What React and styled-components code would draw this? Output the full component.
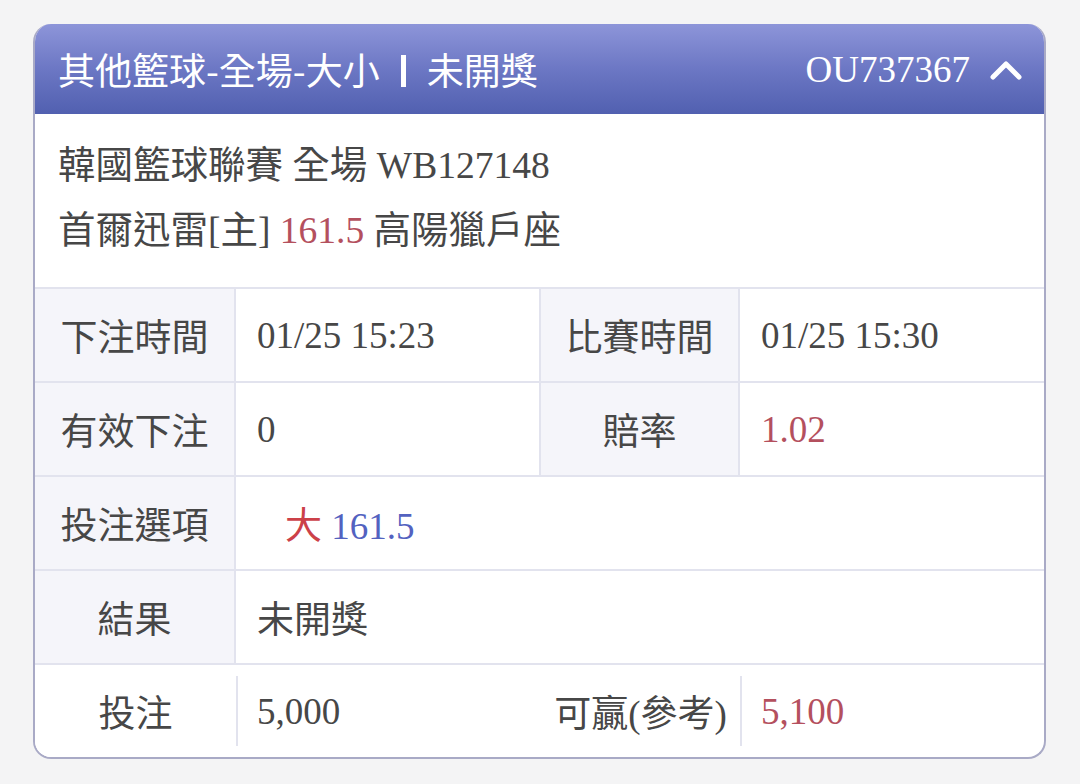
import styled, { createGlobalStyle } from "styled-components"

const Global = createGlobalStyle`
  body {
    margin: 0;
    background: #f4f4f5;
    font-family: "Liberation Serif", "Noto Sans CJK TC", serif;
    color: #474747;
  }
`

function Chevron() {
  return (
    <svg width="32" height="24" viewBox="0 0 32 24">
      <path d="M3 20 L16 7 L29 20" fill="none" stroke="#fff" strokeWidth="5" strokeLinecap="round" strokeLinejoin="round" />
    </svg>
  )
}

export default function App() {
  return (
    <>
      <Global />
      <Page>
        <Card>
          <Header>
            <Title>
              <span>其他籃球-全場-大小</span>
              <Bar />
              <span>未開獎</span>
            </Title>
            <Code>
              OU737367 <Chevron />
            </Code>
          </Header>

          <Info>
            <div>韓國籃球聯賽 全場 WB127148</div>
            <div>
              首爾迅雷[主] <Red>161.5</Red> 高陽獵戶座
            </div>
          </Info>

          <Row>
            <Label>下注時間</Label>
            <Value>01/25 15:23</Value>
            <Label>比賽時間</Label>
            <Value>01/25 15:30</Value>
          </Row>
          <Row>
            <Label>有效下注</Label>
            <Value>0</Value>
            <Label>賠率</Label>
            <Value><Red>1.02</Red></Value>
          </Row>
          <Row>
            <Label>投注選項</Label>
            <Value $span $indent>
              <span>
                <Big>大</Big> <Blue>161.5</Blue>
              </span>
            </Value>
          </Row>
          <Row>
            <Label>結果</Label>
            <Value $span>未開獎</Value>
          </Row>
          <Row $last>
            <Label $plain>投注</Label>
            <Value $short>5,000</Value>
            <Label $plain>可贏(參考)</Label>
            <Value $short><Red>5,100</Red></Value>
          </Row>
        </Card>
      </Page>
    </>
  )
}

const Page = styled.div`
  padding: 24px 34px 0 33px;
`

const Card = styled.div`
  border: 2px solid #a9aac6;
  border-top: none;
  border-radius: 18px;
  overflow: hidden;
  background: #fff;
`

const Header = styled.div`
  height: 90px;
  display: flex;
  align-items: center;
  justify-content: space-between;
  padding: 0 22px 0 23px;
  background: linear-gradient(180deg, #8d95d9 0%, #6c77c4 50%, #5160b0 100%);
  color: #fff;
`

const Title = styled.div`
  font-family: "Noto Sans CJK TC", sans-serif;
  font-size: 37px;
  display: flex;
  align-items: center;
  gap: 21px;
  white-space: pre;
`

const Bar = styled.span`
  display: inline-block;
  width: 5px;
  height: 32px;
  background: #fff;
  margin-top: 4px;
`

const Code = styled.div`
  font-size: 37px;
  display: flex;
  align-items: center;
  gap: 20px;
`

const Info = styled.div`
  padding: 19px 0 24px 23px;
  font-size: 37.5px;
  line-height: 65px;
  border-bottom: 2px solid #e2e3ee;
`

const Red = styled.span`
  color: #b4505e;
`

const Big = styled.span`
  color: #cc4149;
  font-family: "Noto Sans CJK TC", sans-serif;
`

const Blue = styled.span`
  color: #5362c0;
`

const Row = styled.div`
  display: grid;
  grid-template-columns: 201px 305px 199px 1fr;
  height: 92px;
  border-bottom: ${(p) => (p.$last ? "none" : "2px solid #e2e3ee")};
  align-items: stretch;
`

const Label = styled.div`
  display: flex;
  align-items: center;
  justify-content: center;
  font-size: 37px;
  background: ${(p) => (p.$plain ? "#fff" : "#f5f5fa")};
  border-right: ${(p) => (p.$plain ? "none" : "2px solid #e2e3ee")};
`

const Value = styled.div`
  display: flex;
  align-items: center;
  padding-left: ${(p) => (p.$indent ? "49px" : "21px")};
  font-size: 37px;
  grid-column: ${(p) => (p.$span ? "2 / 5" : "auto")};
  border-right: ${(p) => (p.$span || p.$short ? "none" : "2px solid #e2e3ee")};
  &:last-child {
    border-right: none;
  }
  ${(p) =>
    p.$short &&
    `
    border-left: 2px solid #e2e3ee;
    margin: 11px 0;
    padding-left: 19px;
  `}
`
